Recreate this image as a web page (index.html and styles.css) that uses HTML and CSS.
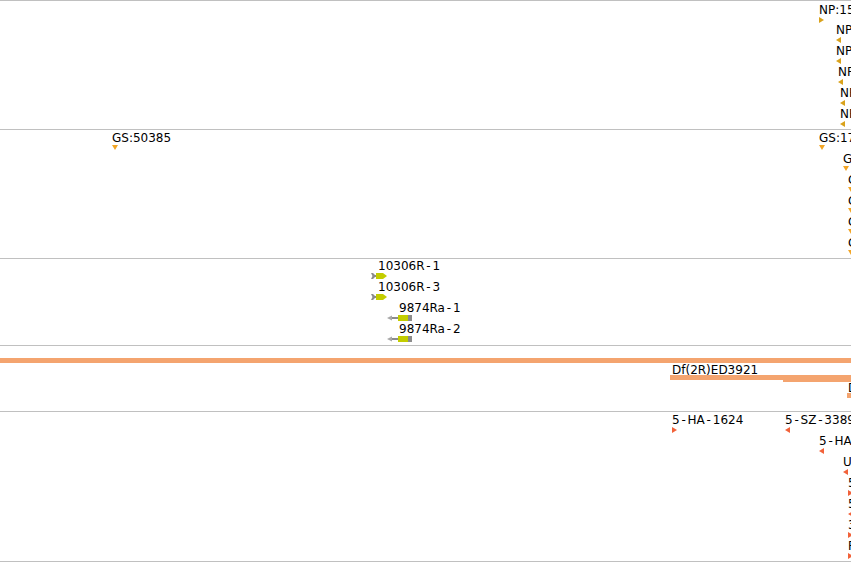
FILE: index.html
```html
<!DOCTYPE html>
<html>
<head>
	<meta charset="utf-8">
	<title>Tracks</title>
	<link rel="stylesheet" href="styles.css">
</head>
<body>
<div class="view">

	<!-- sequence tags -->
	<div class="track t-np">
		<div class="feat" style="left:819px;top:1px"><span class="lbl">NP:15826</span><svg class="g" width="5" height="6"><polygon class="gold" points="0,0 5,3 0,6"/></svg></div>
		<div class="feat" style="left:836px;top:21px"><span class="lbl">NP:30117</span><svg class="g" width="5" height="6"><polygon class="gold" points="5,0 0,3 5,6"/></svg></div>
		<div class="feat" style="left:836px;top:42px"><span class="lbl">NP:30118</span><svg class="g" width="5" height="6"><polygon class="gold" points="5,0 0,3 5,6"/></svg></div>
		<div class="feat" style="left:838px;top:63px"><span class="lbl">NP:30119</span><svg class="g" width="5" height="6"><polygon class="gold" points="5,0 0,3 5,6"/></svg></div>
		<div class="feat" style="left:840px;top:84px"><span class="lbl">NP:30120</span><svg class="g" width="5" height="6"><polygon class="gold" points="5,0 0,3 5,6"/></svg></div>
		<div class="feat" style="left:840px;top:105px"><span class="lbl">NP:30121</span><svg class="g" width="5" height="6"><polygon class="gold" points="5,0 0,3 5,6"/></svg></div>
	</div>

	<!-- gene search insertions -->
	<div class="track t-gs">
		<div class="feat" style="left:112px;top:0px"><span class="lbl">GS:50385</span><svg class="g" width="7" height="5"><polygon class="amber" points="0,0 6,0 3,5"/></svg></div>
		<div class="feat" style="left:819px;top:0px"><span class="lbl">GS:17290</span><svg class="g" width="7" height="5"><polygon class="amber" points="0,0 6,0 3,5"/></svg></div>
		<div class="feat" style="left:843px;top:21px"><span class="lbl">GS:17291</span><svg class="g" width="7" height="5"><polygon class="amber" points="0,0 6,0 3,5"/></svg></div>
		<div class="feat" style="left:848px;top:42px"><span class="lbl">GS:17292</span><svg class="g" width="7" height="5"><polygon class="amber" points="0,0 6,0 3,5"/></svg></div>
		<div class="feat" style="left:848px;top:63px"><span class="lbl">GS:17293</span><svg class="g" width="7" height="5"><polygon class="amber" points="0,0 6,0 3,5"/></svg></div>
		<div class="feat" style="left:848px;top:84px"><span class="lbl">GS:17294</span><svg class="g" width="7" height="5"><polygon class="amber" points="0,0 6,0 3,5"/></svg></div>
		<div class="feat" style="left:848px;top:105px"><span class="lbl">GS:17295</span><svg class="g" width="7" height="5"><polygon class="amber" points="0,0 6,0 3,5"/></svg></div>
	</div>

	<!-- RNAi amplicons -->
	<div class="track t-rnai">
		<div class="feat" style="left:378px;top:-1px"><span class="lbl">10306R<span class="hy">-</span>1</span>
			<svg class="g fwd" width="17" height="6"><polygon class="grey" points="0,0 2,0 4,2 6,2 6,4 4,4 2,6 0,6 1.5,3"/><polygon class="lime" points="5,0 12,0 16,3 12,6 5,6"/></svg></div>
		<div class="feat" style="left:378px;top:20px"><span class="lbl">10306R<span class="hy">-</span>3</span>
			<svg class="g fwd" width="17" height="6"><polygon class="grey" points="0,0 2,0 4,2 6,2 6,4 4,4 2,6 0,6 1.5,3"/><polygon class="lime" points="5,0 12,0 16,3 12,6 5,6"/></svg></div>
		<div class="feat" style="left:399px;top:41px"><span class="lbl">9874Ra<span class="hy">-</span>1</span>
			<svg class="g rev" width="25" height="6"><polygon class="pale" points="0,3 5,0.5 5,5.5"/><rect class="grey" x="5" y="2" width="6" height="2"/><rect class="lime" x="11" y="0" width="10" height="6"/><rect class="grey" x="21" y="0" width="4" height="6"/></svg></div>
		<div class="feat" style="left:399px;top:62px"><span class="lbl">9874Ra<span class="hy">-</span>2</span>
			<svg class="g rev" width="25" height="6"><polygon class="pale" points="0,3 5,0.5 5,5.5"/><rect class="grey" x="5" y="2" width="6" height="2"/><rect class="lime" x="11" y="0" width="10" height="6"/><rect class="grey" x="21" y="0" width="4" height="6"/></svg></div>
	</div>

	<!-- deficiencies -->
	<div class="track t-df">
		<div class="band"></div>
		<div class="feat" style="left:672px;top:16px"><span class="lbl">Df(2R)ED3921</span><div class="bar df-a"></div></div>
		<div class="bar df-b" style="left:783px;top:31px"></div>
		<div class="feat" style="left:848px;top:34px"><span class="lbl">Df(2R)ED3923</span><div class="bar df-c"></div></div>
	</div>

	<!-- transgene insertions -->
	<div class="track t-ins">
		<div class="feat" style="left:672px;top:0px"><span class="lbl">5<span class="hy">-</span>HA<span class="hy">-</span>1624</span><svg class="g" width="5" height="6"><polygon class="red" points="0,0 5,3 0,6"/></svg></div>
		<div class="feat" style="left:785px;top:0px"><span class="lbl">5<span class="hy">-</span>SZ<span class="hy">-</span>3389</span><svg class="g" width="5" height="6"><polygon class="red" points="5,0 0,3 5,6"/></svg></div>
		<div class="feat" style="left:819px;top:21px"><span class="lbl">5<span class="hy">-</span>HA<span class="hy">-</span>3307</span><svg class="g" width="5" height="6"><polygon class="red" points="5,0 0,3 5,6"/></svg></div>
		<div class="feat" style="left:843px;top:42px"><span class="lbl">UAS<span class="hy">-</span>3012</span><svg class="g" width="5" height="6"><polygon class="red" points="5,0 0,3 5,6"/></svg></div>
		<div class="feat" style="left:848px;top:63px"><span class="lbl">5<span class="hy">-</span>SZ<span class="hy">-</span>3417</span><svg class="g" width="5" height="6"><polygon class="red" points="0,0 5,3 0,6"/></svg></div>
		<div class="feat" style="left:848px;top:84px"><span class="lbl">5<span class="hy">-</span>HA<span class="hy">-</span>1102</span><svg class="g" width="5" height="6"><polygon class="red" points="5,0 0,3 5,6"/></svg></div>
		<div class="feat" style="left:848px;top:105px"><span class="lbl">3<span class="hy">-</span>SZ<span class="hy">-</span>0521</span><svg class="g" width="5" height="6"><polygon class="red" points="0,0 5,3 0,6"/></svg></div>
		<div class="feat" style="left:848px;top:126px"><span class="lbl">P{EP}2415</span><svg class="g" width="5" height="6"><polygon class="red" points="0,0 5,3 0,6"/></svg></div>
	</div>

</div>
</body>
</html>
```

FILE: styles.css
```css
html,
body {
	margin: 0;
	padding: 0;
	background: #fff;
}

body {
	width: 851px;
	height: 562px;
	overflow: hidden;
	font-family: "DejaVu Sans", "Liberation Sans", sans-serif;
	font-size: 12px;
	color: #000;
}

.view {
	width: 851px;
}

.track {
	position: relative;
	box-sizing: border-box;
	border-top: 1px solid #c0c0c0;
	overflow: hidden;
}

.t-np,
.t-gs {
	height: 129px;
}

.t-rnai {
	height: 87px;
}

.t-df {
	height: 66px;
}

.t-ins {
	height: 151px;
	border-bottom: 1px solid #c0c0c0;
}

/* one feature = label over glyph */
.feat {
	position: absolute;
	white-space: nowrap;
}

.lbl {
	display: block;
	height: 13px;
	padding-top: 2px;
	line-height: 13px;
}

.hy {
	margin: 0 1.8px;
}

.g {
	display: block;
}

.g.fwd {
	margin-left: -7px;
}

.g.rev {
	margin-left: -12px;
}

.gold {
	fill: #d9a21b;
}

.amber {
	fill: #f2a526;
}

.red {
	fill: #f2623a;
}

.grey {
	fill: #8c8c8c;
}

.pale {
	fill: #a8a8a8;
}

.lime {
	fill: #c3cd00;
}

/* deficiency bars */
.band {
	position: absolute;
	left: 0;
	right: 0;
	top: 12px;
	height: 5px;
	background: #f4a46f;
}

.bar {
	height: 5px;
	background: #f4a46f;
}

.t-df .lbl {
	height: 11px;
}

.df-a {
	margin-left: -2px;
	width: 181px;
}

.df-b {
	position: absolute;
	width: 68px;
}

.df-c {
	margin-left: -1px;
	width: 10px;
}
```
